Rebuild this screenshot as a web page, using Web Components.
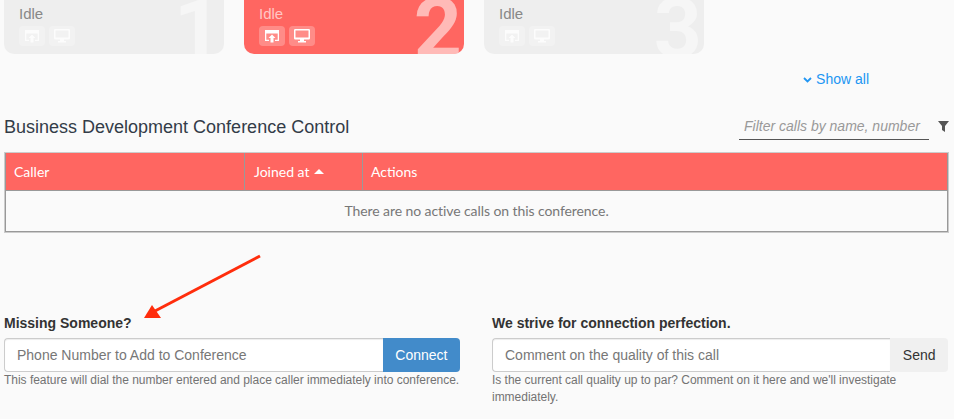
<!DOCTYPE html>
<html>
<head>
<meta charset="utf-8">
<title>Conference Control</title>
<style>
  html, body { margin: 0; background: #fafafa; }
  body { font-family: "Liberation Sans", Arial, sans-serif; font-size: 14px; color: #333; height: 419px; overflow: hidden; position: relative; }
  page-shell { width: 954px; }
</style>
</head>
<body>
<page-shell>
  <call-card slot="cards" number="1" status="Idle"></call-card>
  <call-card slot="cards" number="2" status="Idle" active></call-card>
  <call-card slot="cards" number="3" status="Idle"></call-card>
  <conference-table slot="table" title="Business Development Conference Control"></conference-table>
  <action-field slot="forms" label="Missing Someone?" placeholder="Phone Number to Add to Conference" button="Connect" primary
    help="This feature will dial the number entered and place caller immediately into conference."></action-field>
  <action-field slot="forms" label="We strive for connection perfection." placeholder="Comment on the quality of this call" button="Send"
    help="Is the current call quality up to par? Comment on it here and we'll investigate immediately."></action-field>
</page-shell>
<callout-arrow></callout-arrow>

<script>
class PageShell extends HTMLElement {
  constructor() {
    super();
    const shadowRoot = this.attachShadow({mode: 'open'});
    shadowRoot.innerHTML = `
      <style>
        :host { display: block; box-sizing: border-box; padding: 0 6px 0 4px; }
        .cards { display: flex; gap: 20px; height: 54px; }
        .more { display: flex; justify-content: flex-end; align-items: center; gap: 4px; height: 16px; margin-top: 17px; padding-right: 79px; color: #2196f3; font-size: 14px; }
        .more svg { width: 9px; height: 6px; margin-top: 2px; }
        .tables { margin-top: 29px; }
        .forms { display: grid; grid-template-columns: 456px 456px; gap: 32px; margin-top: 82px; }
      </style>
      <div class="cards"><slot name="cards"></slot></div>
      <div class="more">
        <svg viewBox="0 0 9 6"><path d="M1 1l3.5 3.5L8 1" fill="none" stroke="#2196f3" stroke-width="1.8"/></svg>
        <span>Show all</span>
      </div>
      <div class="tables"><slot name="table"></slot></div>
      <div class="forms"><slot name="forms"></slot></div>
    `;
  }
}

class CallCard extends HTMLElement {
  constructor() {
    super();
    const shadowRoot = this.attachShadow({mode: 'open'});
    shadowRoot.innerHTML = `
      <style>
        :host { display: block; position: relative; box-sizing: border-box; width: 220px; height: 54px; padding: 5px 15px 0; background: #eee; color: #888; border-radius: 0 0 10px 10px; overflow: hidden; }
        :host([active]) { background: #ff6661; color: #ffc6c4; }
        .status { font-size: 15px; line-height: 17px; }
        .icons { display: flex; gap: 4px; margin-top: 4px; }
        .icon { display: flex; align-items: center; justify-content: center; width: 26px; height: 20px; border-radius: 4px; background: rgba(255,255,255,.25); }
        svg { display: block; }
        /* Roboto here: the Liberation bold 1 has a foot, the reference's does not */
        .number { position: absolute; right: 2px; top: -11px; font-family: Roboto, sans-serif; font-size: 84px; line-height: 80px; font-weight: bold; color: rgba(255,255,255,.45); }
        :host([active]) .number { color: rgba(255,255,255,.55); }
        :host(:not([active])) svg { opacity: .8; }
      </style>
      <div class="status"></div>
      <div class="icons">
        <span class="icon">
          <svg width="16" height="14" viewBox="0 0 16 14">
            <path d="M1 1h14v11h-4v-1.300h2.700V4.500H2.300v6.200H5V12H1z" fill="#fff"/>
            <path d="M8 5.500L11.500 9H9.500v4.500h-3V9H4.500z" fill="#fff"/>
          </svg>
        </span>
        <span class="icon">
          <svg width="16" height="14" viewBox="0 0 16 14"><path d="M1.200 0h13.600A1.200 1.200 0 0 1 16 1.200v8.100a1.200 1.200 0 0 1-1.200 1.200H10V12h2v1.500H4V12h2v-1.500H1.200A1.200 1.200 0 0 1 0 9.300V1.200A1.200 1.200 0 0 1 1.200 0zM1.500 1.500V8.500h13V1.500z" fill="#fff" fill-rule="evenodd"/></svg>
        </span>
      </div>
      <div class="number"></div>
    `;
  }

  connectedCallback() {
    this.shadowRoot.querySelector('.status').textContent = this.getAttribute('status');
    this.shadowRoot.querySelector('.number').textContent = this.getAttribute('number');
  }
}

class ConferenceTable extends HTMLElement {
  constructor() {
    super();
    const shadowRoot = this.attachShadow({mode: 'open'});
    shadowRoot.innerHTML = `
      <style>
        :host { display: block; }
        .head { display: flex; justify-content: space-between; align-items: flex-end; height: 24px; margin-bottom: 12px; }
        h2 { margin: 0 0 3px; font-size: 18px; font-weight: normal; line-height: 20px; color: #333c48; }
        .filter { display: flex; align-items: center; gap: 9px; margin-right: -1px; }
        .box { width: 190px; height: 24px; box-sizing: border-box; padding: 0 5px; border-bottom: 1px solid #555; font-size: 14px; font-style: italic; line-height: 20px; color: #999; }
        .filter svg { display: block; margin-top: -4px; }
        .table { border: 1px solid #ccc; margin-right: -1px; font-family: Lato, sans-serif; font-size: 14px; }
        .inner { border: 1px solid #999; border-top: 0; }
        .row { display: grid; grid-template-columns: 239px 118px 1fr; height: 38px; background: #ff6661; color: #fff; border-bottom: 1px solid #999; box-sizing: border-box; }
        .row div { display: flex; align-items: center; gap: 5px; padding-left: 9px; box-sizing: border-box; border-right: 1px solid #999; }
        .row div:first-child { padding-left: 8px; }
        .row div:last-child { border-right: 0; padding-left: 8px; }
        .tri { width: 0; height: 0; border: 5px solid transparent; border-top: 0; border-bottom-color: #fff; }
        .empty { height: 40px; box-sizing: border-box; padding-bottom: 2px; display: flex; align-items: center; justify-content: center; color: #777; letter-spacing: -.08px; }
      </style>
      <div class="head">
        <h2></h2>
        <div class="filter">
          <div class="box">Filter calls by name, number</div>
          <svg width="11" height="11" viewBox="0 0 11 11"><path d="M0 0h11L7 5v6L4 9V5z" fill="#555"/></svg>
        </div>
      </div>
      <div class="table">
        <div class="inner">
          <div class="row">
            <div>Caller</div>
            <div>Joined at <span class="tri"></span></div>
            <div>Actions</div>
          </div>
          <div class="empty">There are no active calls on this conference.</div>
        </div>
      </div>
    `;
  }

  connectedCallback() {
    this.shadowRoot.querySelector('h2').textContent = this.getAttribute('title');
  }
}

class ActionField extends HTMLElement {
  constructor() {
    super();
    const shadowRoot = this.attachShadow({mode: 'open'});
    shadowRoot.innerHTML = `
      <style>
        :host { display: block; }
        label { display: block; font-size: 14px; font-weight: bold; line-height: 16px; margin-bottom: 7px; color: #333; }
        .group { display: flex; height: 34px; }
        input { flex: 1; min-width: 0; box-sizing: border-box; height: 34px; padding: 0 12px; font: 14px "Liberation Sans", Arial, sans-serif; background: #fff; border: 1px solid #ccc; border-right: 0; border-radius: 4px 0 0 4px; box-shadow: inset 0 1px 1px rgba(0,0,0,.075); }
        input::placeholder { color: #777; opacity: 1; }
        button { height: 34px; padding: 0 12.5px; font: 14px "Liberation Sans", Arial, sans-serif; color: #333; background: #f0f0f0; border: 0; border-radius: 0 4px 4px 0; }
        :host([primary]) button { color: #fff; background: #428bca; }
        p { margin: 0; font-size: 12px; line-height: 17px; color: #737373; letter-spacing: -.02px; }
      </style>
      <label></label>
      <div class="group"><input type="text"><button type="button"></button></div>
      <p></p>
    `;
  }

  connectedCallback() {
    const root = this.shadowRoot;
    root.querySelector('label').textContent = this.getAttribute('label');
    root.querySelector('input').placeholder = this.getAttribute('placeholder');
    root.querySelector('button').textContent = this.getAttribute('button');
    root.querySelector('p').textContent = this.getAttribute('help');
  }
}

class CalloutArrow extends HTMLElement {
  constructor() {
    super();
    const shadowRoot = this.attachShadow({mode: 'open'});
    // annotation drawn over the page, sits where the reference has it
    shadowRoot.innerHTML = `
      <style>
        :host { display: block; position: absolute; left: 140px; top: 250px; width: 125px; height: 72px; }
        svg { display: block; }
      </style>
      <svg width="125" height="72" viewBox="0 0 125 72">
        <path d="M120 6L15 61" stroke="#ff2d0c" stroke-width="3" fill="none"/>
        <path d="M4 68L12 55 21 68z" fill="#ff2d0c"/>
      </svg>
    `;
  }
}

customElements.define('page-shell', PageShell);
customElements.define('call-card', CallCard);
customElements.define('conference-table', ConferenceTable);
customElements.define('action-field', ActionField);
customElements.define('callout-arrow', CalloutArrow);
</script>
</body>
</html>
